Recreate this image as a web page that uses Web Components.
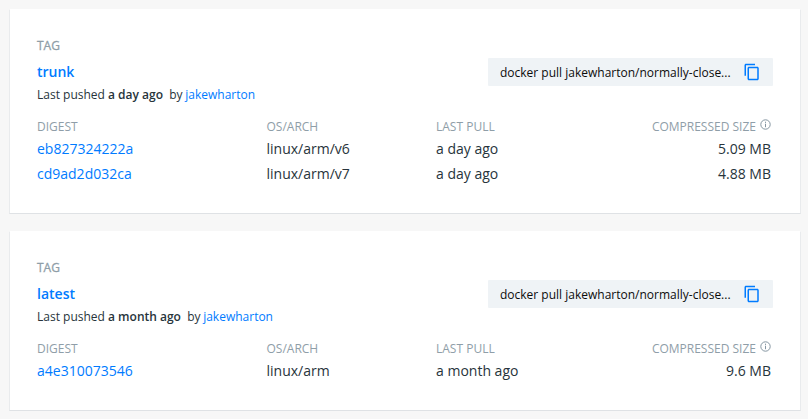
<!DOCTYPE html>
<html lang="en"><head><meta charset="utf-8"><title>Tags</title>
<style>body{margin:0;background:#f7f7f7;font-family:"Open Sans",sans-serif;color:#27343b}</style></head>
<body><tag-list></tag-list>
<script>
class CopyCommand extends HTMLElement{
 connectedCallback(){this.attachShadow({mode:'open'}).innerHTML=`<style>
 :host{display:flex;box-sizing:border-box;width:285px;height:28px;background:#eff3f6;border-radius:1px;align-items:center;justify-content:space-between;padding:0 12px;font-size:12px;line-height:18px;color:#0c0c0c}
 span{padding-top:1px}
 svg{display:block;width:18px;height:18px}</style><span><slot></slot></span>
 <svg viewBox="0 0 24 24" fill="#007bff"><path d="M16 1H4C2.9 1 2 1.9 2 3v14h2V3h12V1zm3 4H8C6.9 5 6 5.9 6 7v14c0 1.1.9 2 2 2h11c1.1 0 2-.9 2-2V7c0-1.1-.9-2-2-2zm0 16H8V7h11v14z"/></svg>`}}
customElements.define('copy-command',CopyCommand);
class TagCard extends HTMLElement{
 connectedCallback(){
 const rows=this.getAttribute('rows').split(';').map(r=>r.split(','));
 this.attachShadow({mode:'open'}).innerHTML=`<style>
 :host{display:block;box-sizing:border-box;background:#fff;border:1px solid #e9ebed;border-top-color:#fff;border-bottom-color:#dfe2e5;padding:27px 27px}
 .label{font-size:12px;line-height:18px;color:#8f9ea8}
 .tag{-webkit-text-stroke:.3px #8f9ea8}
 .head{display:flex;justify-content:space-between;align-items:flex-start;height:28px;padding-top:3px}
 .name{font-size:14px;line-height:28px;font-weight:600;color:#007bff}
 .push{font-size:12px;line-height:18px;white-space:pre}
 b{font-weight:600}a{color:#007bff}.push a{margin-left:-.5px}
 .grid{display:grid;grid-template-columns:229.5px 169.5px 1fr auto;padding:14px 2px 0 0}
 .grid .label,.grid .v{display:block}.v{font-size:14px;line-height:25px}
 .r{text-align:right}svg{display:inline-block;width:11px;height:11px;margin-left:4px;vertical-align:1px}
 .grid .label{height:18px}
 </style>
 <div class="label tag">TAG</div>
 <div class="head"><span class="name">${this.getAttribute('name')}</span><copy-command>docker pull jakewharton/normally-close...</copy-command></div>
 <div class="push">Last pushed <b>${this.getAttribute('pushed')}</b>&nbsp; by <a>jakewharton</a></div>
 <div class="grid"><span class="label">DIGEST</span><span class="label">OS/ARCH</span><span class="label">LAST PULL</span><span class="label r">COMPRESSED SIZE<svg viewBox="0 0 11 11"><circle cx="5.5" cy="5.5" r="4.7" fill="none" stroke="#8495a1"/><path d="M5.5 4.7v3.5M5.5 2.7v1.2" stroke="#8495a1"/></svg></span>
 ${rows.map(r=>`<a class="v">${r[0]}</a><span class="v">${r[1]}</span><span class="v">${r[2]}</span><span class="v r">${r[3]}</span>`).join('')}</div>`}}
customElements.define('tag-card',TagCard);
class TagList extends HTMLElement{
 connectedCallback(){this.attachShadow({mode:'open'}).innerHTML=`<style>:host{display:flex;flex-direction:column;gap:17px;padding:9px 7px 0 9px}</style>
 <tag-card name="trunk" pushed="a day ago" rows="eb827324222a,linux/arm/v6,a day ago,5.09 MB;cd9ad2d032ca,linux/arm/v7,a day ago,4.88 MB"></tag-card>
 <tag-card name="latest" pushed="a month ago" rows="a4e310073546,linux/arm,a month ago,9.6 MB"></tag-card>`}}
customElements.define('tag-list',TagList);
</script></body></html>
